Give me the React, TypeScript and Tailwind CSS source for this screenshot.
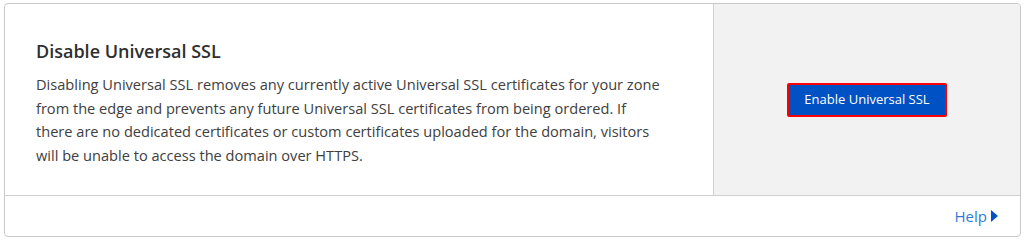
import React from "react";

export default function App() {
  return (
    <div className="w-[1024px] h-[240px] bg-white pt-[3px] pl-[4px]" style={{ fontFamily: '"Open Sans", "Noto Sans", sans-serif' }}>
      <div className="w-[1017px] h-[234px] border border-[#c8c8c8] rounded-[4px] flex flex-col overflow-hidden">
        <div className="flex h-[192px] border-b border-[#cfcfcf]">
          <div className="w-[709px] border-r border-[#d0d0d0] pl-[31px] pr-[30px] pt-[35px]">
            <h2 className="text-[18px] leading-[24px] font-semibold text-[#2f2f2f]">Disable Universal SSL</h2>
            <p className="mt-[10px] text-[14.6px] leading-[23.6px] text-[#404040]">
              Disabling Universal SSL removes any currently active Universal SSL certificates for your zone from the edge and prevents any future Universal SSL certificates from being ordered. If
              <br />
              there are no dedicated certificates or custom certificates uploaded for the domain, visitors
              <br />
              will be unable to access the domain over HTTPS.
            </p>
          </div>
          <div className="flex-1 bg-[#f2f2f2] flex items-center justify-center">
            <button className="w-[160px] h-[34px] bg-[#0051c3] border-2 border-[#f00] rounded-[2px] text-white text-[13px] font-medium">
              Enable Universal SSL
            </button>
          </div>
        </div>
        <div className="flex-1 flex items-center justify-end pr-[22px]">
          <a className="text-[#2f7bdc] text-[15px] flex items-center gap-[4px] cursor-pointer">
            Help
            <svg width="7" height="12" viewBox="0 0 7 12"><path d="M0 0 L7 6 L0 12 Z" fill="#0051c3" /></svg>
          </a>
        </div>
      </div>
    </div>
  );
}
